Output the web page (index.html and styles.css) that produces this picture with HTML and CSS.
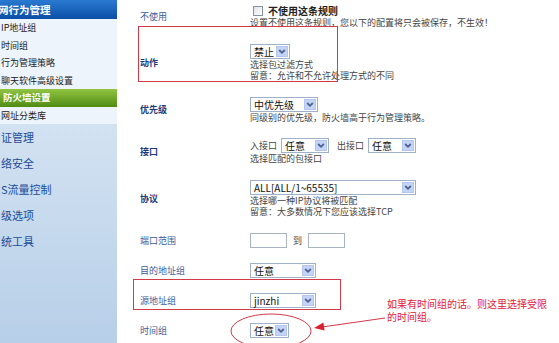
FILE: index.html
```html
<!DOCTYPE html>
<html lang="zh-CN">
  <head>
    <meta charset="UTF-8" />
    <title>防火墙设置</title>
    <link rel="stylesheet" href="styles.css">
  </head>

  <body>
    <div class="sidebar">
      <div class="side-head">网行为管理</div>
      <div class="side-item">IP地址组</div>
      <div class="side-item">时间组</div>
      <div class="side-item">行为管理策略</div>
      <div class="side-item">聊天软件高级设置</div>
      <div class="side-item active">防火墙设置</div>
      <div class="side-item">网址分类库</div>
      <div class="side-cat">证管理</div>
      <div class="side-cat">络安全</div>
      <div class="side-cat">S流量控制</div>
      <div class="side-cat">级选项</div>
      <div class="side-cat">统工具</div>
    </div>

    <div class="main">
      <div class="form">
        <div class="row">
          <div class="label">不使用</div>
          <div class="field">
            <div class="check-line">
              <span class="checkbox"></span>
              <b>不使用这条规则</b>
            </div>
            <div class="hint">设置不使用这条规则，您以下的配置将只会被保存，不生效！</div>
          </div>
        </div>

        <div class="row">
          <div class="label strong">动作</div>
          <div class="field">
            <span class="select w40"><span class="select-text">禁止</span><span class="select-btn"></span></span>
            <div class="hint">选择包过滤方式</div>
            <div class="hint">留意：允许和不允许处理方式的不同</div>
          </div>
        </div>

        <div class="row">
          <div class="label strong">优先级</div>
          <div class="field">
            <span class="select w68"><span class="select-text">中优先级</span><span class="select-btn"></span></span>
            <div class="hint">同级别的优先级，防火墙高于行为管理策略。</div>
          </div>
        </div>

        <div class="row">
          <div class="label strong">接口</div>
          <div class="field">
            <div class="inline">
              <span class="hint">入接口</span>
              <span class="select w48"><span class="select-text">任意</span><span class="select-btn"></span></span>
              <span class="hint out">出接口</span>
              <span class="select w48"><span class="select-text">任意</span><span class="select-btn"></span></span>
            </div>
            <div class="hint">选择匹配的包接口</div>
          </div>
        </div>

        <div class="row">
          <div class="label strong">协议</div>
          <div class="field">
            <span class="select w166"><span class="select-text">ALL[ALL/1~65535]</span><span class="select-btn"></span></span>
            <div class="hint">选择哪一种IP协议将被匹配</div>
            <div class="hint">留意：大多数情况下您应该选择TCP</div>
          </div>
        </div>

        <div class="row">
          <div class="label">端口范围</div>
          <div class="field">
            <div class="inline">
              <span class="textbox"></span>
              <span class="hint">到</span>
              <span class="textbox"></span>
            </div>
          </div>
        </div>

        <div class="row">
          <div class="label">目的地址组</div>
          <div class="field">
            <span class="select w66"><span class="select-text">任意</span><span class="select-btn"></span></span>
          </div>
        </div>

        <div class="row">
          <div class="label">源地址组</div>
          <div class="field">
            <span class="select w66"><span class="select-text">jinzhi</span><span class="select-btn"></span></span>
          </div>
        </div>

        <div class="row">
          <div class="label">时间组</div>
          <div class="field">
            <span class="select w39"><span class="select-text">任意</span><span class="select-btn"></span></span>
          </div>
        </div>
      </div>
    </div>

    <!-- red markup drawn over the screenshot -->
    <svg class="marks" width="559" height="343" viewBox="0 0 559 343">
      <rect x="138.5" y="26.5" width="199" height="55" />
      <rect x="133.5" y="279.5" width="207" height="30" />
      <ellipse cx="271" cy="331" rx="40" ry="17" />
      <line x1="385" y1="318" x2="322" y2="327" />
      <polygon points="314,328 323.4,322.6 324.6,330.6" />
    </svg>
    <div class="note">如果有时间组的话。则这里选择受限<br />的时间组。</div>
  </body>
</html>
```

FILE: styles.css
```css
* {
  margin: 0;
  padding: 0;
  box-sizing: border-box;
}

html,
body {
  width: 559px;
  height: 343px;
  overflow: hidden;
  background: #fff;
  font-family: "Noto Sans CJK SC", "Noto Sans", sans-serif;
}

body {
  display: flex;
  position: relative;
}

/* left menu */

.sidebar {
  width: 117px;
  height: 343px;
  flex-shrink: 0;
  background: linear-gradient(#e3edf8, #b7cfe8);
}

.side-head {
  height: 19px;
  line-height: 19px;
  text-indent: -2px;
  color: #fff;
  font-size: 10.5px;
  font-weight: bold;
  background: linear-gradient(#2a7ad2, #0b4ea6);
  white-space: nowrap;
}

.side-item {
  height: 17.5px;
  line-height: 17.5px;
  padding-left: 1px;
  font-size: 9px;
  color: #222;
  background: #eef4fb;
  white-space: nowrap;
}

.side-item.active {
  color: #fff;
  font-weight: bold;
  font-size: 9.5px;
  padding-left: 3px;
  background: linear-gradient(#92c442, #4f8c13);
}

.side-cat {
  height: 26px;
  line-height: 26px;
  padding-left: 1px;
  font-size: 11px;
  color: #1e4c98;
  white-space: nowrap;
}

/* form */

.main {
  flex: 1;
  padding-left: 23px;
}

.form {
  display: flex;
  flex-direction: column;
  gap: 15px;
  padding-top: 4px;
}

.row {
  display: flex;
  align-items: center;
}

.label {
  width: 110px;
  flex-shrink: 0;
  font-size: 9px;
  color: #3a5c9c;
}

.label.strong {
  font-weight: bold;
  color: #1c3a7c;
}

.field {
  display: flex;
  flex-direction: column;
  align-items: flex-start;
}

.hint {
  font-size: 9px;
  line-height: 11.5px;
  color: #444;
  white-space: nowrap;
}

.check-line {
  display: flex;
  align-items: center;
  gap: 5px;
  height: 13px;
  padding-left: 3px;
}

.check-line b {
  font-size: 10px;
  line-height: 12px;
  color: #222;
}

.checkbox {
  width: 10px;
  height: 10px;
  border: 1px solid #8592a6;
  background: linear-gradient(135deg, #e2e4e8, #fff);
}

.inline {
  display: flex;
  align-items: center;
  gap: 4px;
}

.inline .hint {
  line-height: 15px;
}

.inline .out {
  margin-left: 4px;
}

.select {
  display: flex;
  height: 15px;
  border: 1px solid #9fb1c8;
  background: #fff;
  padding: 0 1px;
}

.select-text {
  flex: 1;
  font-size: 10px;
  line-height: 13px;
  padding-left: 2px;
  color: #111;
  white-space: nowrap;
}

.select-btn {
  width: 12px;
  height: 11px;
  margin-top: 1px;
  flex-shrink: 0;
  background: #c4d4f6 url("data:image/svg+xml,%3Csvg xmlns='http://www.w3.org/2000/svg' width='12' height='11'%3E%3Cpath d='M3.2 4 L6 6.8 L8.8 4' fill='none' stroke='%234d6290' stroke-width='1.8'/%3E%3C/svg%3E") center no-repeat;
  border: 1px solid #b4c6ee;
}

.w39 { width: 39px; }
.w40 { width: 40px; }
.w48 { width: 48px; }
.w66 { width: 66px; }
.w68 { width: 68px; }
.w166 { width: 166px; }

.textbox {
  width: 37px;
  height: 15px;
  border: 1px solid #a9b4c2;
  background: #fff;
}

.inline .textbox + .hint {
  margin: 0 2px;
}

/* annotation layer */

.marks {
  position: absolute;
  top: 0;
  left: 0;
  pointer-events: none;
  fill: none;
  stroke: #d23a48;
  stroke-width: 1;
}

.marks polygon {
  fill: #d8202e;
  stroke: none;
}

.note {
  position: absolute;
  left: 387px;
  top: 297px;
  font-size: 10px;
  line-height: 13px;
  color: #e2203a;
  white-space: nowrap;
}
```
